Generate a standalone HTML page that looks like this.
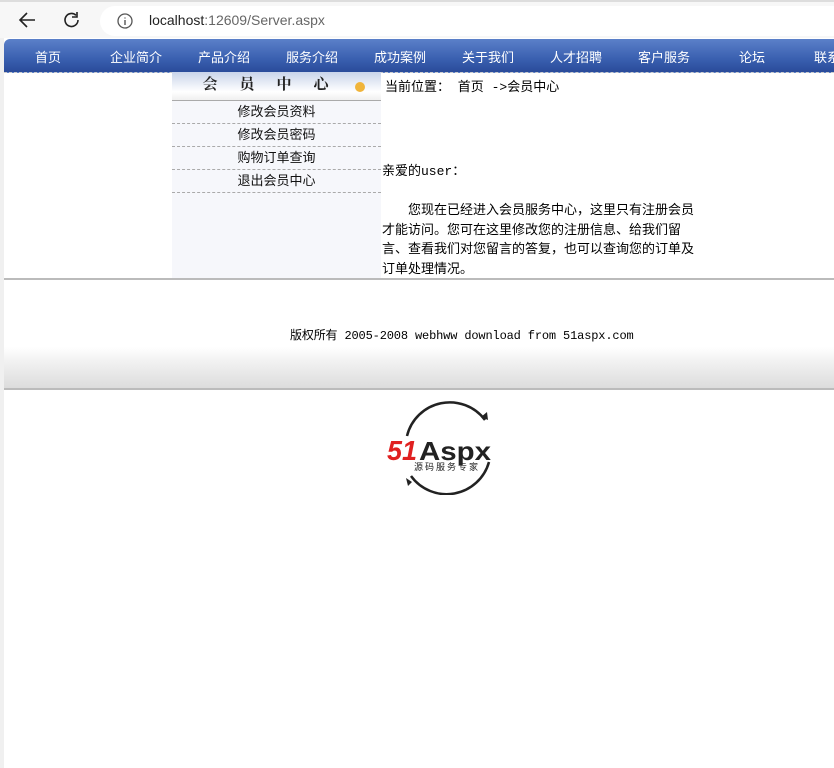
<!DOCTYPE html>
<html><head><meta charset="utf-8"><style>
body{margin:0;width:834px;height:768px;background:#fff;position:relative;overflow:hidden;font-family:"Liberation Sans","WenQuanYi Zen Hei","Noto Sans CJK SC",sans-serif;}
.chrome{position:absolute;left:0;top:0;width:834px;height:38px;background:#f7f7f7;border-top:2px solid #ddd;box-sizing:border-box}
.url{position:absolute;left:100px;top:4px;width:760px;height:30px;border-radius:15px;background:#fff}
.url span{position:absolute;left:49px;top:6px;font-size:14px;color:#222;font-family:"Liberation Sans",sans-serif}
.url span i{font-style:normal;color:#666}
.left{position:absolute;left:0;top:38px;width:4px;height:730px;background:#f0f0f0}
.nav{position:absolute;left:4px;top:39px;width:840px;height:33px;background:linear-gradient(#5b80c9,#3a60b0 60%,#2a4b9a);border-top-left-radius:6px;border-bottom:1px dashed #ccc}
.nav span{position:absolute;top:8px;color:#fff;font-size:13px;width:88px;text-align:center;margin-left:-44px}
.side{position:absolute;left:172px;top:72px;width:209px;height:206px;background:#f6f7fb}
.sh{height:28px;background:linear-gradient(#c9d4ea,#fff 70%,#f0f0f0);border-bottom:1px solid #aaa;position:relative;text-align:center;font-size:15px;font-weight:bold;letter-spacing:22px;line-height:26px;color:#222;font-family:"Liberation Serif","Noto Serif CJK SC",serif}
.sh b{position:absolute;right:16px;top:10px;width:10px;height:10px;border-radius:50%;background:#f0b43a}
.si{height:22px;border-bottom:1px dashed #aaa;text-align:center;font-size:13px;line-height:22px;color:#111}
.main{position:absolute;left:382px;top:76px;width:330px;font-size:13px;color:#000;font-family:"Liberation Mono","WenQuanYi Zen Hei",monospace;white-space:nowrap}
.hr1{position:absolute;left:4px;top:278px;width:830px;border-top:2px solid #bbb}
.foot{position:absolute;left:4px;top:280px;width:830px;height:108px;background:linear-gradient(#fff 0,#fff 62%,#f2f2f2 75%,#dcdcdc);border-bottom:2px solid #bbb}
.foot div{position:absolute;left:286px;top:46px;font-size:12px;letter-spacing:-0.15px;font-family:"Liberation Mono","WenQuanYi Zen Hei",monospace}
</style></head><body>
<div class="chrome">
<svg style="position:absolute;left:17px;top:9px" width="20" height="18"><path d="M18 9H3M10 2L3 9l7 7" stroke="#222" stroke-width="1.6" fill="none"/></svg>
<svg style="position:absolute;left:62px;top:8px" width="20" height="20"><path d="M16 10a6.5 6.5 0 1 1-2-4.7" stroke="#222" stroke-width="1.6" fill="none"/><path d="M15 2v5h-5" stroke="#222" stroke-width="1.6" fill="none"/></svg>
<div class="url"><svg style="position:absolute;left:17px;top:7px" width="16" height="16"><circle cx="8" cy="8" r="7" stroke="#555" stroke-width="1.3" fill="none"/><path d="M8 7v5M8 4.5v1" stroke="#555" stroke-width="1.4"/></svg><span>localhost<i>:12609/Server.aspx</i></span></div>
</div>
<div class="left"></div>
<div class="nav">
<span style="left:44px">首页</span><span style="left:132px">企业简介</span><span style="left:220px">产品介绍</span><span style="left:308px">服务介绍</span><span style="left:396px">成功案例</span><span style="left:484px">关于我们</span><span style="left:572px">人才招聘</span><span style="left:660px">客户服务</span><span style="left:748px">论坛</span><span style="left:836px">联系我们</span>
</div>
<div class="side">
<div class="sh">会员中心<b></b></div>
<div class="si">修改会员资料</div><div class="si">修改会员密码</div><div class="si">购物订单查询</div><div class="si">退出会员中心</div>
</div>
<div class="main">
<div style="margin-left:3px">当前位置： 首页 ->会员中心</div>
<div style="margin-top:65px">亲爱的user：</div>
<div style="margin-top:22px;line-height:19.7px"><span style="display:inline-block;width:26px"></span>您现在已经进入会员服务中心，这里只有注册会员<br>才能访问。您可在这里修改您的注册信息、给我们留<br>言、查看我们对您留言的答复，也可以查询您的订单及<br>订单处理情况。</div>
</div>
<div class="hr1"></div>
<div class="foot"><div>版权所有 2005-2008 webhww download from 51aspx.com</div></div>
<svg style="position:absolute;left:385px;top:400px" width="130" height="95">
<path d="M22 36A44 44 0 0 1 100 20" stroke="#222" stroke-width="2.5" fill="none"/>
<path d="M104 62A44 44 0 0 1 26 76" stroke="#222" stroke-width="2.5" fill="none"/>
<path d="M96 17l7 3-1-8z" fill="#222"/><path d="M27 82l-6-4 2 8z" fill="#222"/>
<text x="2" y="60" font-family="Liberation Sans,sans-serif" font-weight="bold" font-style="italic" font-size="28" fill="#e02020" textLength="30" lengthAdjust="spacingAndGlyphs">51</text>
<text x="34" y="60" font-family="Liberation Sans,sans-serif" font-weight="bold" font-size="26" fill="#222" textLength="72" lengthAdjust="spacingAndGlyphs">Aspx</text>
<text x="29" y="70" font-family="WenQuanYi Zen Hei,sans-serif" font-size="9" fill="#222" textLength="64" lengthAdjust="spacing">源码服务专家</text>
</svg>
</body></html>
